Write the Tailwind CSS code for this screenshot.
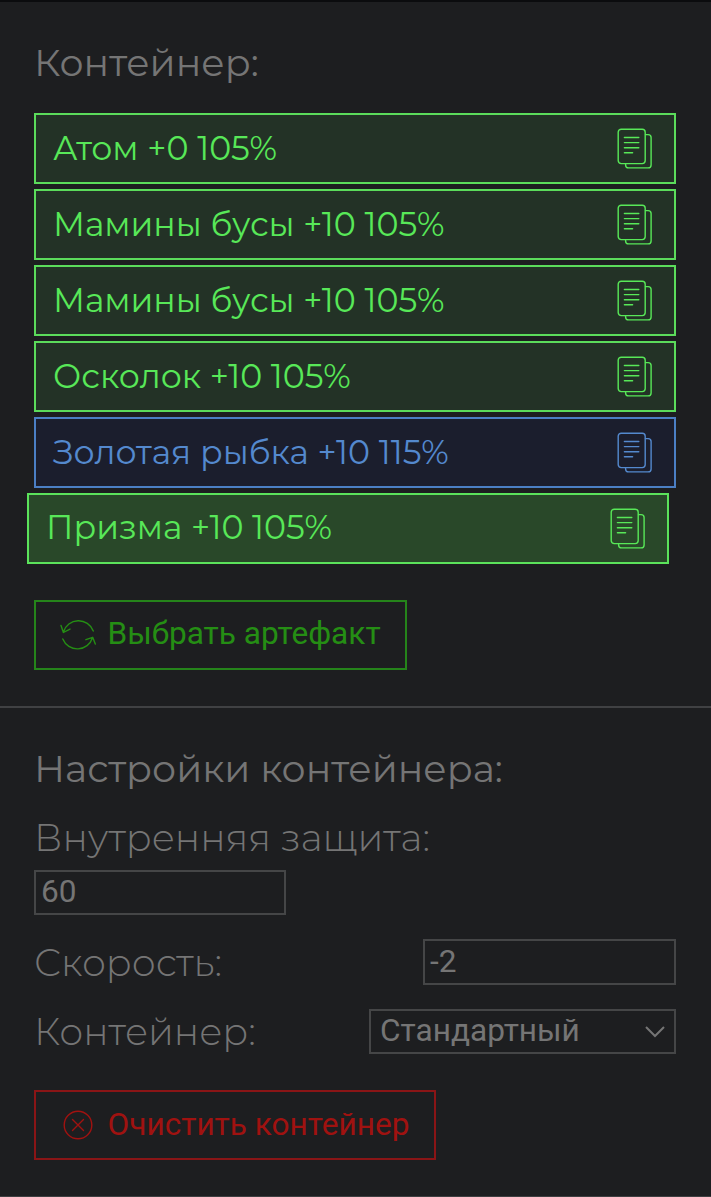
<!DOCTYPE html>
<html lang="ru">
<head>
    <meta charset="UTF-8">
    <meta name="viewport" content="width=device-width, initial-scale=1.0">
    <title>Контейнер</title>
    <script src="https://cdn.jsdelivr.net/npm/@tailwindcss/browser@4"></script>
</head>
<body class="bg-[#1d1e20] font-['Montserrat','Inter',sans-serif] text-[#757575] overflow-hidden">
    <!-- Shared icon -->
    <svg class="hidden">
        <symbol id="copy" viewBox="0 0 36 42">
            <g fill="none" stroke="currentColor" stroke-width="1.4" stroke-linecap="round" stroke-linejoin="round">
                <rect x="1.2" y="1.2" width="27" height="34.4" rx="3" />
                <path d="M28.5 6.6h2.6a3 3 0 0 1 3 3v27.3a3 3 0 0 1-3 3H11.6a3 3 0 0 1-3-3v-1" />
                <path d="M7.4 9.5h14.4M7.4 14.6h14.4M7.4 19.7h14.4M7.4 24.8h8.2" />
            </g>
        </symbol>
    </svg>

    <div class="h-[1197px] border-t-2 border-t-[#0b0c0e] border-b border-b-[#3e3f41]">
        <!-- Container items -->
        <section class="h-[706px] px-[34px] pt-[37px] border-b-2 border-[#404143]">
            <h2 class="h-[74px] text-[37.9px] leading-[48px]">Контейнер:</h2>
            <div class="w-[641.5px] flex flex-col gap-[5px] text-[33.2px] text-[#58e858]">
                <div class="h-[71px] flex items-center justify-between pl-[17px] pr-[21px] border-2 border-[#5bdc5b] bg-[#233226]">
                    <span>Атом +0 105%</span>
                    <svg class="w-9 h-[42px]"><use href="#copy" /></svg>
                </div>
                <div class="h-[71px] flex items-center justify-between pl-[17px] pr-[21px] border-2 border-[#5bdc5b] bg-[#233226]">
                    <span>Мамины бусы +10 105%</span>
                    <svg class="w-9 h-[42px]"><use href="#copy" /></svg>
                </div>
                <div class="h-[71px] flex items-center justify-between pl-[17px] pr-[21px] border-2 border-[#5bdc5b] bg-[#233226]">
                    <span>Мамины бусы +10 105%</span>
                    <svg class="w-9 h-[42px]"><use href="#copy" /></svg>
                </div>
                <div class="h-[71px] flex items-center justify-between pl-[17px] pr-[21px] border-2 border-[#5bdc5b] bg-[#233226]">
                    <span>Осколок +10 105%</span>
                    <svg class="w-9 h-[42px]"><use href="#copy" /></svg>
                </div>
                <div class="h-[71px] flex items-center justify-between pl-[17px] pr-[21px] border-2 border-[#4b7fc4] bg-[#1b1e2d] text-[#5489ce]">
                    <span>Золотая рыбка +10 115%</span>
                    <svg class="w-9 h-[42px]"><use href="#copy" /></svg>
                </div>
                <div class="h-[71px] -ml-[7px] mr-[7px] flex items-center justify-between pl-[17px] pr-[21px] border-2 border-[#5be35b] bg-[#294829]">
                    <span class="pb-0.5">Призма +10 105%</span>
                    <svg class="w-9 h-[42px]"><use href="#copy" /></svg>
                </div>
            </div>
            <button class="mt-9 w-[373px] h-[70px] flex items-center pl-6 border-2 border-[#25841a] text-[#258e14] font-[Roboto] text-[31.6px]">
                <svg class="w-9 h-9 mr-[11.5px]" viewBox="0 0 36 36" fill="none" stroke="currentColor" stroke-width="1.4" stroke-linecap="round" stroke-linejoin="round">
                    <path d="M33.3 14A15.8 15.8 0 0 0 3.4 15M1 8.5l2.4 7 6.6-3.4" />
                    <path d="M2.8 22a15.8 15.8 0 0 0 29.7-1.2M35.3 27l-2.6-6.7-6.8 2.4" />
                </svg>
                <span class="pb-0.5">Выбрать артефакт</span>
            </button>
        </section>

        <!-- Settings -->
        <section class="px-[34px] pt-[37px]">
            <h2 class="h-[69px] text-[37.9px] leading-[48px]">Настройки контейнера:</h2>
            <div class="h-[56px] text-[37.9px] leading-[48px] font-light">Внутренняя защита:</div>
            <input type="text" value="60" class="block w-[252px] h-[45px] px-[5px] pb-[1px] border-2 border-[#454647] font-[Roboto] text-[31.6px]">
            <div class="mt-6 w-[641.5px] h-[46px] flex items-center justify-between text-[37.9px] font-light">
                <span class="pt-0.5">Скорость:</span>
                <input type="text" value="-2" class="w-[252.5px] h-[46px] px-[5px] pb-[1px] border-2 border-[#454647] font-[Roboto] font-normal text-[31.6px]">
            </div>
            <div class="mt-6 w-[641.5px] h-[45px] flex items-center justify-between text-[37.9px] font-light">
                <span class="pt-0.5">Контейнер:</span>
                <div class="w-[306.5px] h-[45px] flex items-center justify-between pl-[9px] pr-[9px] border-2 border-[#454647] font-[Roboto] font-normal text-[31.6px]">
                    <span class="pb-px">Стандартный</span>
                    <svg class="w-5 h-3" viewBox="0 0 20 12" fill="none" stroke="currentColor" stroke-width="2"><path d="M1 1l9 9 9-9" /></svg>
                </div>
            </div>
            <button class="mt-9 w-[402px] h-[70px] flex items-center pl-[27px] border-2 border-[#8a1516] text-[#a01210] font-[Roboto] text-[31.6px]">
                <svg class="w-[30px] h-[30px] mr-[14.5px]" viewBox="0 0 30 30" fill="none" stroke="currentColor" stroke-width="1.4" stroke-linecap="round">
                    <circle cx="15" cy="15" r="13.8" />
                    <path d="M9.5 9.5l11 11M20.5 9.5l-11 11" />
                </svg>
                <span>Очистить контейнер</span>
            </button>
        </section>
    </div>
</body>
</html>
